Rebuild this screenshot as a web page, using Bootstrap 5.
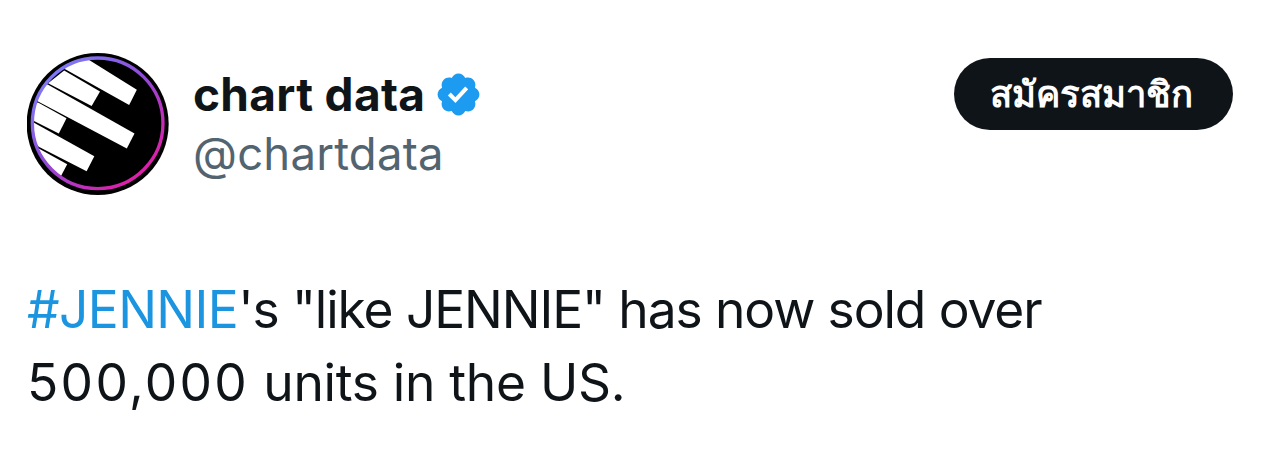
<!DOCTYPE html>
<html lang="en">
<head>
<meta charset="utf-8">
<title>chart data</title>
<link href="https://cdn.jsdelivr.net/npm/bootstrap@5.3.0/dist/css/bootstrap.min.css" rel="stylesheet">
<style>
html,body{height:100%;background:#fff;overflow:hidden}
body{font-family:Inter,"Noto Sans","Liberation Sans",sans-serif;color:#0f1419}
.tweet-wrap{padding:53px 51px 0 27px}
.avatar-svg{width:142px;height:142px;flex:none;display:block}
.who{margin-left:24px;padding-top:11px}
.who-name{font-size:46px;font-weight:700;line-height:60px;letter-spacing:.3px}
.who-handle{font-size:45.5px;line-height:60px;color:#536471;letter-spacing:.2px}
.badge-svg{width:49px;height:49px;margin-left:9px;display:block}
.join-btn{background:#0f1419;color:#fff;font-size:36.4px;font-weight:700;line-height:1;width:279px;height:72px;border-radius:36px;border:0;margin-top:5px;padding:0 4px 0 0}
.join-btn:hover{background:#0f1419;color:#fff}
.tweet-text{font-size:51.5px;line-height:72.5px;margin:78px 0 0;letter-spacing:-1.1px}
.tag{color:#1b95e0;text-decoration:none;letter-spacing:-.6px}
.wide-num{letter-spacing:2.3px}
.line-two{letter-spacing:-.3px}
</style>
</head>
<body>
<div class="tweet-wrap">
  <div class="d-flex justify-content-between align-items-start">
    <div class="d-flex align-items-start">
      <svg class="avatar-svg" viewBox="37 40 424 424" role="img" aria-label="chart data">
        <defs>
          <clipPath id="inner"><circle cx="248" cy="250" r="193"/></clipPath>
          <linearGradient id="ring" x1="0.15" y1="0.1" x2="0.85" y2="0.9">
            <stop offset="0" stop-color="#7f7bf5"/>
            <stop offset=".45" stop-color="#8f4bd8"/>
            <stop offset="1" stop-color="#e01ea6"/>
          </linearGradient>
        </defs>
        <circle cx="248" cy="252" r="212" fill="#000"/>
        <g clip-path="url(#inner)" fill="#fff">
          <polygon points="205,50 365,150 342,195 150,88 170,30"/>
          <polygon points="148,92 255,155 230,198 100,130"/>
          <polygon points="100,135 358,280 335,325 70,185 60,120"/>
          <polygon points="70,188 155,235 132,280 58,243 40,200"/>
          <polygon points="58,248 238,348 215,393 72,320 40,280"/>
          <polygon points="72,325 157,372 137,410 60,370 50,320"/>
        </g>
        <circle cx="248" cy="250" r="195" fill="none" stroke="url(#ring)" stroke-width="10"/>
      </svg>
      <div class="who">
        <div class="who-name d-flex align-items-center">chart data
          <svg class="badge-svg" viewBox="0 0 24 24" aria-label="Verified"><path fill="#1d9bf0" d="M22.25 12c0-1.43-.88-2.67-2.19-3.34.46-1.39.2-2.9-.81-3.91s-2.52-1.27-3.91-.81c-.66-1.31-1.91-2.19-3.34-2.19s-2.67.88-3.33 2.19c-1.4-.46-2.91-.2-3.92.81s-1.26 2.52-.8 3.91c-1.31.67-2.2 1.91-2.2 3.34s.89 2.67 2.2 3.34c-.46 1.39-.21 2.9.8 3.91s2.52 1.26 3.91.81c.67 1.31 1.91 2.19 3.34 2.19s2.68-.88 3.34-2.19c1.39.45 2.9.2 3.91-.81s1.27-2.52.81-3.91c1.31-.67 2.19-1.91 2.19-3.34zm-11.71 4.2L6.8 12.46l1.41-1.42 2.26 2.26 4.8-5.23 1.47 1.36-6.2 6.77z"/></svg>
        </div>
        <div class="who-handle">@chartdata</div>
      </div>
    </div>
    <button type="button" class="btn join-btn">สมัครสมาชิก</button>
  </div>
  <p class="tweet-text"><a class="tag" href="#">#JENNIE</a>'s "like JENNIE" has now sold over<br><span class="line-two"><span class="wide-num">500,000</span> units in the US.</span></p>
</div>
<script src="https://cdn.jsdelivr.net/npm/bootstrap@5.3.0/dist/js/bootstrap.bundle.min.js"></script>
</body>
</html>
